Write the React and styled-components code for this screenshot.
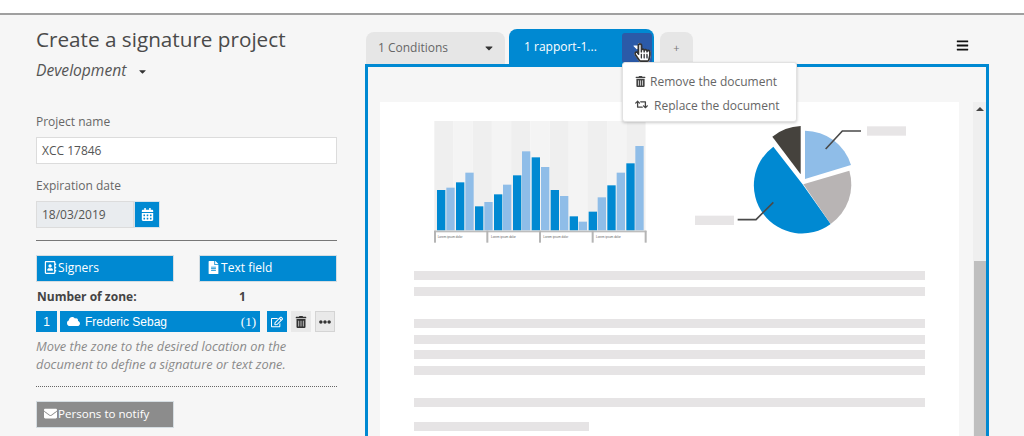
import styled, { createGlobalStyle } from 'styled-components';
import {
  FaBars,
  FaCalendarAlt,
  FaCaretDown,
  FaCloud,
  FaEllipsisH,
  FaEnvelope,
  FaFileAlt,
  FaHandPointer,
  FaRegAddressBook,
  FaRegEdit,
  FaRegHandPointer,
  FaRetweet,
  FaTrashAlt,
} from 'react-icons/fa';

const BLUE = '#0089d2';

const bars = [225, 218, 202, 173, 274, 261, 238, 209, 181, 109, 127, 156, 225, 243, 304, 320, 290, 247, 211, 173, 145, 93];
const barStarts = [36, 64, 93, 121, 150, 178, 207, 234, 264, 291, 320, 348, 377, 405, 434, 461, 491, 518, 547, 575, 604, 631];
const stripes = [0, 1, 2, 3, 4, 5, 6, 7, 8, 9, 10];
const axisTicks = [30, 187, 345, 503, 662];
const axisLabels = [38, 198, 355, 513];

const textLines = [
  { top: 0 },
  { top: 7 },
  { top: 23 },
  { top: 7 },
  { top: 6 },
  { top: 7 },
  { top: 23 },
  { top: 15, short: true },
];

function BarChart() {
  return (
    <ChartSvg width='230' height='135' viewBox='0 0 690 405'>
      {stripes.map((i) => (
        <rect key={i} x={28 + i * 57.6} y='18' width='57.6' height='330' fill={i % 2 ? '#f4f4f4' : '#efefef'} />
      ))}
      {bars.map((top, i) => (
        <rect key={i} x={barStarts[i]} y={top} width='25' height={346 - top} fill={i % 2 ? '#8fbde8' : BLUE} />
      ))}
      <rect x='28' y='347' width='636' height='5' fill='#bdbdbd' />
      {axisTicks.map((x) => (
        <rect key={x} x={x - 3} y='347' width='6' height='36' fill='#b5b5b5' />
      ))}
      {axisLabels.map((x) => (
        <text key={x} x={x} y='370' fontSize='9' fontFamily='Liberation Sans, sans-serif' fill='#666'>
          Lorem ipsum dolor
        </text>
      ))}
    </ChartSvg>
  );
}

function PieChart() {
  return (
    <ChartSvg width='230' height='130' viewBox='0 0 690 390'>
      <path d='M360 192 L360 47 A145 145 0 0 1 498 150 Z' fill='#8fbde8' />
      <path d='M347 178 L347 33 A145 145 0 0 0 262 65 Z' fill='#45423d' />
      <path d='M352 207 L265 95 A144 144 0 0 0 437 327 Z' fill={BLUE} />
      <path d='M355 208 L493 167 A145 145 0 0 1 437 327 Z' fill='#b8b4b4' />
      <path d='M422 102 L472 48 L528 48' fill='none' stroke='#4a4a4a' strokeWidth='5' />
      <path d='M265 262 L213 314 L158 314' fill='none' stroke='#4a4a4a' strokeWidth='5' />
      <rect x='546' y='34' width='117' height='28' fill='#e7e5e6' />
      <rect x='30' y='302' width='117' height='28' fill='#e7e5e6' />
    </ChartSvg>
  );
}

export default function App() {
  return (
    <>
      <GlobalStyle />
      <Screen>
        <Sidebar>
          <Title>Create a signature project</Title>
          <Subtitle>
            Development <FaCaretDown />
          </Subtitle>
          <Label $top={33}>Project name</Label>
          <TextInput>XCC 17846</TextInput>
          <Label $top={13}>Expiration date</Label>
          <DateRow>
            <DateInput>18/03/2019</DateInput>
            <DateButton>
              <FaCalendarAlt />
            </DateButton>
          </DateRow>
          <Divider />
          <ActionRow>
            <ActionButton>
              <FaRegAddressBook /> Signers
            </ActionButton>
            <ActionButton>
              <FaFileAlt /> Text field
            </ActionButton>
          </ActionRow>
          <ZoneCount>
            <span>Number of zone:</span>
            <span>1</span>
          </ZoneCount>
          <ZoneRow>
            <ZoneIndex>1</ZoneIndex>
            <ZoneName>
              <FaCloud />
              <span>Frederic Sebag</span>
              <ZoneTotal>(1)</ZoneTotal>
            </ZoneName>
            <IconButton $primary>
              <FaRegEdit />
            </IconButton>
            <IconButton>
              <FaTrashAlt />
            </IconButton>
            <IconButton $outlined>
              <FaEllipsisH />
            </IconButton>
          </ZoneRow>
          <Help>Move the zone to the desired location on the document to define a signature or text zone.</Help>
          <DottedDivider />
          <NotifyButton>
            <FaEnvelope /> Persons to notify
          </NotifyButton>
        </Sidebar>

        <Main>
          <Tabs>
            <Tab>
              1 Conditions <FaCaretDown />
            </Tab>
            <ActiveTab>
              <span>1 rapport-1...</span>
              <TabToggle>
                <FaCaretDown />
                <Cursor>
                  <FaHandPointer />
                  <FaRegHandPointer />
                </Cursor>
              </TabToggle>
              <Menu>
                <MenuItem>
                  <FaTrashAlt /> Remove the document
                </MenuItem>
                <MenuItem $wide>
                  <FaRetweet /> Replace the document
                </MenuItem>
              </Menu>
            </ActiveTab>
            <AddTab>+</AddTab>
            <MenuToggle>
              <FaBars />
            </MenuToggle>
          </Tabs>
          <Panel>
            <Page>
              <Charts>
                <BarChart />
                <PieChart />
              </Charts>
              <TextBlock>
                {textLines.map((line, i) => (
                  <TextLine key={i} $top={line.top} $short={line.short} />
                ))}
              </TextBlock>
            </Page>
            <Scrollbar>
              <ScrollArrow />
              <ScrollThumb />
            </Scrollbar>
          </Panel>
        </Main>
      </Screen>
    </>
  );
}

const GlobalStyle = createGlobalStyle`
  html, body {
    margin: 0;
    height: 100%;
    overflow: hidden;
    background: #fff;
  }
  * {
    box-sizing: border-box;
  }
`;

const Screen = styled.div`
  margin-top: 13px;
  height: 423px;
  border-top: 2px solid #a0a0a0;
  background: #f6f6f6;
  display: flex;
  overflow: hidden;
  font-family: 'Open Sans', sans-serif;
  color: #555;
`;

const Sidebar = styled.aside`
  width: 301px;
  margin-left: 36px;
  flex-shrink: 0;
  font-size: 12px;
`;

const Title = styled.h1`
  margin: 9px 0 0;
  font-size: 20.7px;
  font-weight: 400;
  line-height: 30px;
  color: #4a4a4a;
`;

const Subtitle = styled.div`
  margin-top: 6px;
  font-size: 15.6px;
  line-height: 20px;
  font-style: italic;
  color: #555;

  svg {
    margin-left: 7px;
    font-size: 11px;
    color: #333;
    vertical-align: -1px;
  }
`;

const Label = styled.div`
  margin-top: ${(p) => p.$top}px;
  line-height: 18px;
  color: #666;
`;

const TextInput = styled.div`
  margin-top: 6px;
  height: 27px;
  padding-left: 5px;
  background: #fff;
  border: 1px solid #dcdcdc;
  line-height: 25px;
  color: #555;
`;

const DateRow = styled.div`
  margin-top: 6px;
  display: flex;
`;

const DateInput = styled(TextInput)`
  margin-top: 0;
  width: 98px;
  background: #e9ecef;
`;

const DateButton = styled.div`
  width: 26px;
  height: 27px;
  background: ${BLUE};
  border: 1px solid #d5e3ec;
  color: #fff;
  display: flex;
  align-items: center;
  justify-content: center;
  font-size: 13px;
`;

const Divider = styled.div`
  margin-top: 12px;
  border-top: 1px solid #777;
`;

const ActionRow = styled.div`
  margin-top: 14px;
  display: flex;
  justify-content: space-between;
`;

const ActionButton = styled.div`
  width: 138px;
  height: 27px;
  padding-left: 7px;
  background: ${BLUE};
  border: 1px solid #d5dde2;
  color: #fff;
  line-height: 24px;

  svg {
    margin-right: -2px;
    font-size: 13px;
    vertical-align: -2px;
  }
`;

const ZoneCount = styled.div`
  margin-top: 6px;
  height: 18px;
  line-height: 18px;
  font-weight: 700;
  color: #444;
  display: flex;

  span:first-child {
    width: 203px;
    padding-left: 1px;
  }
`;

const ZoneRow = styled.div`
  margin-top: 5px;
  height: 21px;
  display: flex;
  align-items: center;
`;

const ZoneIndex = styled.div`
  width: 21px;
  height: 21px;
  background: ${BLUE};
  color: #fff;
  text-align: center;
  line-height: 22px;
  font-family: 'Liberation Sans', sans-serif;
  font-size: 12px;
`;

const ZoneName = styled.div`
  margin-left: 3px;
  margin-right: 7px;
  width: 200px;
  height: 21px;
  padding: 0 4px 0 7px;
  background: ${BLUE};
  color: #fff;
  display: flex;
  align-items: center;
  font-family: 'Liberation Sans', sans-serif;
  font-size: 12px;

  svg {
    font-size: 13px;
    margin-right: 5px;
  }
`;

const ZoneTotal = styled.span`
  margin-left: auto;
  font-family: 'Liberation Serif', serif;
  font-size: 13px;
`;

const IconButton = styled.div`
  width: 20px;
  height: 21px;
  margin-right: ${(p) => (p.$outlined ? 0 : 4)}px;
  background: ${(p) => (p.$primary ? BLUE : '#e9e9e9')};
  border: 1px solid ${(p) => (p.$outlined ? '#d4d4d4' : 'transparent')};
  color: ${(p) => (p.$primary ? '#fff' : '#333')};
  display: flex;
  align-items: center;
  justify-content: center;
  font-size: 12px;
`;

const Help = styled.p`
  margin: 5px 0 0;
  font-size: 12.8px;
  font-style: italic;
  line-height: 18px;
  color: #8a8a8a;
`;

const DottedDivider = styled.div`
  margin-top: 13px;
  border-top: 1px dotted #666;
`;

const NotifyButton = styled(ActionButton)`
  margin-top: 14px;
  background: #8c8c8c;
  font-size: 11.6px;
`;

const Main = styled.main`
  margin-left: 28px;
  width: 624px;
  flex-shrink: 0;
`;

const Tabs = styled.div`
  margin-top: 14px;
  height: 35px;
  display: flex;
  align-items: flex-end;
  font-size: 12px;
`;

const Tab = styled.div`
  margin-left: 1px;
  width: 139px;
  height: 32px;
  padding: 0 10px 1px 12px;
  background: #e6e6e6;
  border-radius: 8px 8px 0 0;
  color: #666;
  display: flex;
  align-items: center;
  justify-content: space-between;

  svg {
    font-size: 12px;
    color: #333;
  }
`;

const ActiveTab = styled.div`
  position: relative;
  margin-left: 4px;
  width: 145px;
  height: 35px;
  padding: 0 2px 1px 15px;
  background: ${BLUE};
  border-radius: 8px 8px 0 0;
  color: #fff;
  display: flex;
  align-items: center;
  justify-content: space-between;
`;

const TabToggle = styled.div`
  position: relative;
  align-self: flex-end;
  width: 30px;
  height: 30px;
  padding-bottom: 2px;
  background: #2b5aa8;
  border-radius: 3px;
  display: flex;
  align-items: center;
  justify-content: center;
  font-size: 12px;
`;

const Cursor = styled.div`
  position: absolute;
  left: 11px;
  top: 10px;
  width: 15px;
  height: 20px;

  svg {
    position: absolute;
    left: 0;
    top: 0;
    font-size: 19px;
  }

  svg:last-child {
    color: #333;
  }
`;

const Menu = styled.div`
  position: absolute;
  z-index: 2;
  left: 113px;
  top: 33px;
  width: 175px;
  height: 60px;
  padding: 7px 0 0 12px;
  background: #fff;
  border: 1px solid #e2e2e2;
  border-radius: 3px;
  box-shadow: 0 1px 3px rgba(0, 0, 0, 0.2);
  color: #666;
`;

const MenuItem = styled.div`
  height: 24px;
  line-height: 24px;
  white-space: nowrap;

  svg {
    margin-right: ${(p) => (p.$wide ? 3 : 1)}px;
    font-size: ${(p) => (p.$wide ? 13 : 11)}px;
    color: #444;
    vertical-align: -1px;
  }
`;

const AddTab = styled.div`
  margin-left: 6px;
  width: 33px;
  height: 32px;
  padding-bottom: 2px;
  background: #e6e6e6;
  border-radius: 8px 8px 0 0;
  color: #777;
  font-size: 11px;
  display: flex;
  align-items: center;
  justify-content: center;
`;

const MenuToggle = styled.div`
  margin-left: auto;
  margin-right: 20px;
  align-self: flex-start;
  margin-top: 9px;
  font-size: 13px;
  color: #111;
`;

const Panel = styled.div`
  height: 400px;
  padding: 35px 0 0 12px;
  background: #f6f6f6;
  border: 3px solid ${BLUE};
  display: flex;
  gap: 14px;
`;

const Page = styled.div`
  width: 579px;
  height: 360px;
  background: #fff;
  flex-shrink: 0;
`;

const Charts = styled.div`
  padding-left: 45px;
  padding-top: 13px;
  display: flex;
  gap: 30px;
`;

const ChartSvg = styled.svg`
  display: block;
  flex-shrink: 0;
`;

const TextBlock = styled.div`
  margin: 21px 34px 0;
`;

const TextLine = styled.div`
  margin-top: ${(p) => p.$top}px;
  width: ${(p) => (p.$short ? '175px' : '100%')};
  height: 9px;
  background: #e6e4e5;
`;

const Scrollbar = styled.div`
  position: relative;
  width: 13px;
  height: 360px;
  background: #efefef;
`;

const ScrollArrow = styled.div`
  margin: 5px auto 0;
  width: 0;
  height: 0;
  border-left: 4px solid transparent;
  border-right: 4px solid transparent;
  border-bottom: 4px solid #444;
`;

const ScrollThumb = styled.div`
  margin: 150px 0 0 1px;
  width: 12px;
  height: 200px;
  background: #bfbfbf;
`;
